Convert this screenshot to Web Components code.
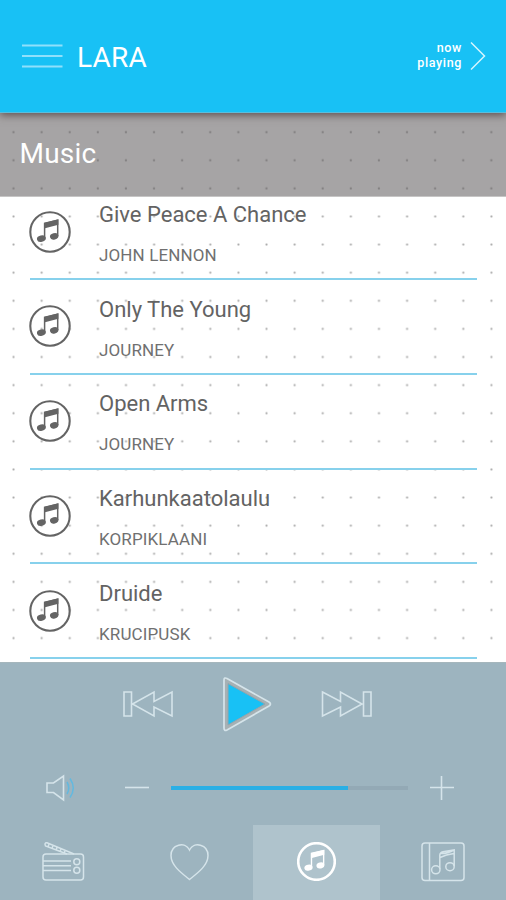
<!DOCTYPE html>
<html lang="en">
<head>
<meta charset="utf-8">
<title>LARA</title>
<style>
html,body{margin:0;height:100%;overflow:hidden}
body{font-family:Roboto,"Liberation Sans",sans-serif}
</style>
</head>
<body>
<lara-app></lara-app>
<script>
const define = (name, html) => customElements.define(name, class extends HTMLElement {
  constructor() {
    super();
    const t = document.createElement('template');
    t.innerHTML = html;
    this.attachShadow({mode: 'open'}).append(t.content.cloneNode(true));
  }
});

const noteSvg = `<svg viewBox="0 0 42 42"><g fill="none" stroke="currentColor"><circle cx="21" cy="21" r="19.7" stroke-width="var(--ring,2.1)"/><path d="M15.600 27.300V12.300L28.700 9.300V25" stroke-width="1.500"/></g><g fill="currentColor"><path d="M15 12L29.400 8.300V13.800L15 17.400Z"/><ellipse cx="12.400" cy="27.700" rx="4.500" ry="3.200" transform="rotate(-14 12.400 27.700)"/><ellipse cx="25.200" cy="25.300" rx="4.300" ry="3.200" transform="rotate(-14 25.200 25.300)"/></g></svg>`;

define('music-badge', `<style>:host{display:block;width:42px;height:42px}svg{display:block;width:100%;height:100%}</style>${noteSvg}`);

define('top-bar', `<style>
:host{display:flex;align-items:center;box-sizing:border-box;height:112.5px;padding:1px 20px 0 22px;background:#18c1f5;color:#fff;box-shadow:0 2px 8px rgba(70,50,48,.75);border-bottom:1.5px solid #5cbddb;position:relative}
svg{display:block}
.title{font-size:28px;line-height:32px;margin-left:14px;letter-spacing:.2px;padding-top:3px}
.now{margin-left:auto;text-align:right;font-size:12.5px;line-height:15px;font-weight:500;letter-spacing:.65px;margin-right:8px;margin-top:-2px}
</style>
<svg width="41" height="26" stroke="#8fe0fb" stroke-width="2"><path d="M0 2.500H40.500M0 13H40.500M0 23.500H40.500"/></svg>
<div class="title"><slot></slot></div>
<div class="now"><slot name="now"></slot></div>
<svg width="16" height="28" fill="none" stroke="#d4f4fe" stroke-width="1.500"><path d="M1 .5L14.500 14L1 27.500"/></svg>`);

define('section-title', `<style>
:host{display:block;box-sizing:border-box;height:84px;padding:24px 19.500px;font-size:28px;line-height:34px;color:#fff;letter-spacing:.2px;background:radial-gradient(circle at 13.500px 19.200px,#727071 0,#858384 .7px,transparent 1.600px) 0 0/28.110px 28.110px,#a6a4a5;border-bottom:1px solid #c6c5c5}
</style><slot></slot>`);

define('track-row', `<style>
:host{display:flex;box-sizing:border-box;height:94.750px;margin:0 29px 0 30px;border-bottom:2px solid #87d1ec;color:#636363}
music-badge{margin:25.200px 28px 0 -1px;flex:none;color:#646464}
.t{font-size:22px;line-height:26px;margin-top:16.600px}
.a{font-size:17px;line-height:20px;margin-top:17px;color:#707070;letter-spacing:.12px}
</style><music-badge></music-badge><div><div class="t"><slot></slot></div><div class="a"><slot name="artist"></slot></div></div>`);

define('transport-controls', `<style>
:host{display:grid;grid-template-columns:52px 52px 52px;gap:47px;justify-content:center;align-items:center;margin-right:13px}
svg{display:block;fill:none;stroke:#d5e4ea;stroke-width:1.600}
</style>
<svg width="52" height="28"><path d="M2 2H9.500V26H2ZM10.500 14L32 2V11.500L50 2V26L32 17V26Z"/></svg>
<svg width="52" height="56"><path d="M3 4Q3 1 6 2.500L48 26Q51 28 48 30L6 54Q3 55.500 3 52Z" fill="#a6b1b5" stroke-width="1.700"/><path d="M7 7.500L44 28L7 49Z" fill="#18c1f5" stroke="#94a5ac" stroke-width="1"/></svg>
<svg width="52" height="28"><path d="M2.500 2L20.500 11.500V2L42 14L20.500 26V17L2.500 26ZM43.500 2H51V26H43.500Z"/></svg>`);

define('volume-control', `<style>
:host{display:flex;align-items:center;padding:0 53px 0 45px}
svg{display:block;flex:none;fill:none;stroke:#d5e4ea;stroke-width:1.600}
.track{flex:none;width:237px;height:4px;margin:0 22px;background:#93a9b5}
.fill{width:177px;height:4px;background:#2aafe5}
.sp{margin-right:49px}
</style>
<svg class="sp" width="31" height="28"><path d="M2 9H8.500L18.500 2V26L8.500 18.500H2Z"/><path d="M22 8Q25.500 14 22 20M25 4.500Q31.500 14 25 23.500" stroke="#62b9e0" stroke-width="1.500"/></svg>
<svg width="24" height="24"><path d="M0 11.500H24"/></svg>
<div class="track"><div class="fill"></div></div>
<svg width="24" height="24"><path d="M0 11.500H24M11.500 0V24"/></svg>`);

define('nav-tab', `<style>
:host{display:flex;align-items:center;justify-content:center;color:#d5e4ea;padding-bottom:2px}
:host([active]){background:#afc3cc;color:#fff}
</style><slot></slot>`);

define('tab-bar', `<style>
:host{display:grid;grid-template-columns:repeat(4,1fr);height:75px}
svg{display:block;fill:none;stroke:currentColor;stroke-width:1.500}
music-badge{width:39px;height:39px;--ring:2.800}
</style>
<nav-tab><svg width="44" height="41"><rect x="2" y="13" width="40.500" height="26" rx="3"/><path d="M2 20H30M2 24.700H30M2 29.400H30M33 13L6 1.800Q3 1.500 4.500 5L26 13M8 3L7 6M12 4.500L11 7.500M16 6.200L15 9.200M20 7.800L19 11M24 9.500L23 12.500"/><circle cx="35.800" cy="20.800" r="3"/><circle cx="35.800" cy="29.300" r="3"/></svg></nav-tab>
<nav-tab><svg width="40" height="38"><path d="M19.500 36.500C10 29 1 22 1 12.500C1 1.500 15 -2 19.500 7C24 -2 38 1.500 38 12.500C38 22 29 29 19.500 36.500Z"/></svg></nav-tab>
<nav-tab active><music-badge></music-badge></nav-tab>
<nav-tab><svg width="44" height="40"><rect x="1" y="1" width="42" height="37.500" rx="3"/><path d="M8.500 1V38.500M18.800 27V13Q19 10.500 22 9.800L33.200 7.800V24M19 15.500Q25 12.500 33 11.500M20 11.500Q27 11.500 33 8"/><ellipse cx="14.800" cy="27.800" rx="4.200" ry="4"/><ellipse cx="29" cy="24.700" rx="4.200" ry="4"/></svg></nav-tab>`);

define('player-panel', `<style>
:host{display:block;height:238px;box-sizing:border-box;background:#9db4bf;border-top:1.500px solid #a5b6bc;margin-top:auto;flex:none}
transport-controls{height:82px}volume-control{height:80px;box-sizing:border-box;padding-top:5px}
</style><transport-controls></transport-controls><volume-control></volume-control><tab-bar></tab-bar>`);

define('lara-app', `<style>
:host{display:flex;flex-direction:column;height:900px;width:506px;overflow:hidden;background:#fff}
top-bar{z-index:1;flex:none}section-title{flex:none}
.list{height:465px;flex:none;overflow:hidden;background:radial-gradient(circle,#a9a9a9 0,#c2c2c2 .7px,transparent 1.600px) -.5px 5.400px/28.110px 28.110px}
.list>:first-child{margin-top:-11.200px}
</style>
<top-bar>LARA<span slot="now">now<br>playing</span></top-bar>
<section-title>Music</section-title>
<div class="list">
<track-row>Give Peace A Chance<span slot="artist">JOHN LENNON</span></track-row>
<track-row>Only The Young<span slot="artist">JOURNEY</span></track-row>
<track-row>Open Arms<span slot="artist">JOURNEY</span></track-row>
<track-row>Karhunkaatolaulu<span slot="artist">KORPIKLAANI</span></track-row>
<track-row>Druide<span slot="artist">KRUCIPUSK</span></track-row>
</div>
<player-panel></player-panel>`);
</script>
</body>
</html>
